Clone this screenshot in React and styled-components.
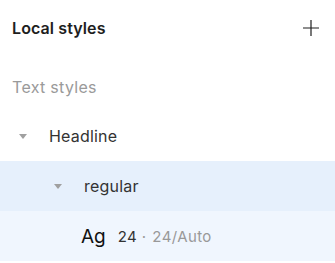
import React from "react";
import styled, { createGlobalStyle } from "styled-components";

const Global = createGlobalStyle`
  body {
    margin: 0;
    background: #ffffff;
    font-family: Inter, "Noto Sans", sans-serif;
    -webkit-font-smoothing: antialiased;
  }
`;

const Panel = styled.div`
  width: 335px;
  height: 263px;
  overflow: hidden;
  background: #ffffff;
`;

const Header = styled.div`
  display: flex;
  align-items: center;
  justify-content: space-between;
  height: 56px;
  padding: 0 12px 0 12px;
  box-sizing: border-box;
`;

const Title = styled.div`
  font-size: 16px;
  font-weight: 600;
  letter-spacing: 0.1px;
  color: #1e1e1e;
`;

const AddButton = styled.button`
  display: flex;
  align-items: center;
  justify-content: center;
  width: 24px;
  height: 24px;
  padding: 0;
  border: none;
  background: none;
  color: #1e1e1e;
`;

const Section = styled.div`
  display: flex;
  align-items: center;
  height: 55px;
  padding-top: 6px;
  box-sizing: border-box;
  padding-left: 12px;
  font-size: 16px;
  letter-spacing: 0.3px;
  color: #9a9a9a;
`;

const Row = styled.div`
  display: flex;
  align-items: center;
  height: 50px;
  padding-left: ${(p) => p.$indent}px;
  background: ${(p) => p.$bg || "transparent"};
  font-size: 16px;
  letter-spacing: 0.2px;
  color: #333333;
`;

const Caret = styled.span`
  width: 0;
  height: 0;
  border-left: 4px solid transparent;
  border-right: 4px solid transparent;
  border-top: 5px solid #a0a0a0;
  margin-right: 22px;
`;

const Sample = styled.span`
  font-size: 19px;
  letter-spacing: 0;
  color: #111111;
  margin-right: 12px;
`;

const Size = styled.span`
  font-size: 15px;
  color: #333333;
`;

const Meta = styled.span`
  font-size: 15px;
  letter-spacing: 0.4px;
  color: #999999;
`;

const Dot = styled.span`
  margin: 0 6px 0 5px;
  color: #999999;
  font-size: 15px;
`;

export default function App() {
  return (
    <Panel>
      <Global />
      <Header>
        <Title>Local styles</Title>
        <AddButton>
          <svg width="18" height="18" viewBox="0 0 18 18">
            <path d="M9 1v16M1 9h16" stroke="currentColor" strokeWidth="1.2" />
          </svg>
        </AddButton>
      </Header>
      <Section>Text styles</Section>
      <Row $indent={19}>
        <Caret />
        Headline
      </Row>
      <Row $indent={54} $bg="#e6f0fc">
        <Caret />
        regular
      </Row>
      <Row $indent={81} $bg="#f0f6fe">
        <Sample>Ag</Sample>
        <Size>24</Size>
        <Dot>·</Dot>
        <Meta>24/Auto</Meta>
      </Row>
    </Panel>
  );
}
